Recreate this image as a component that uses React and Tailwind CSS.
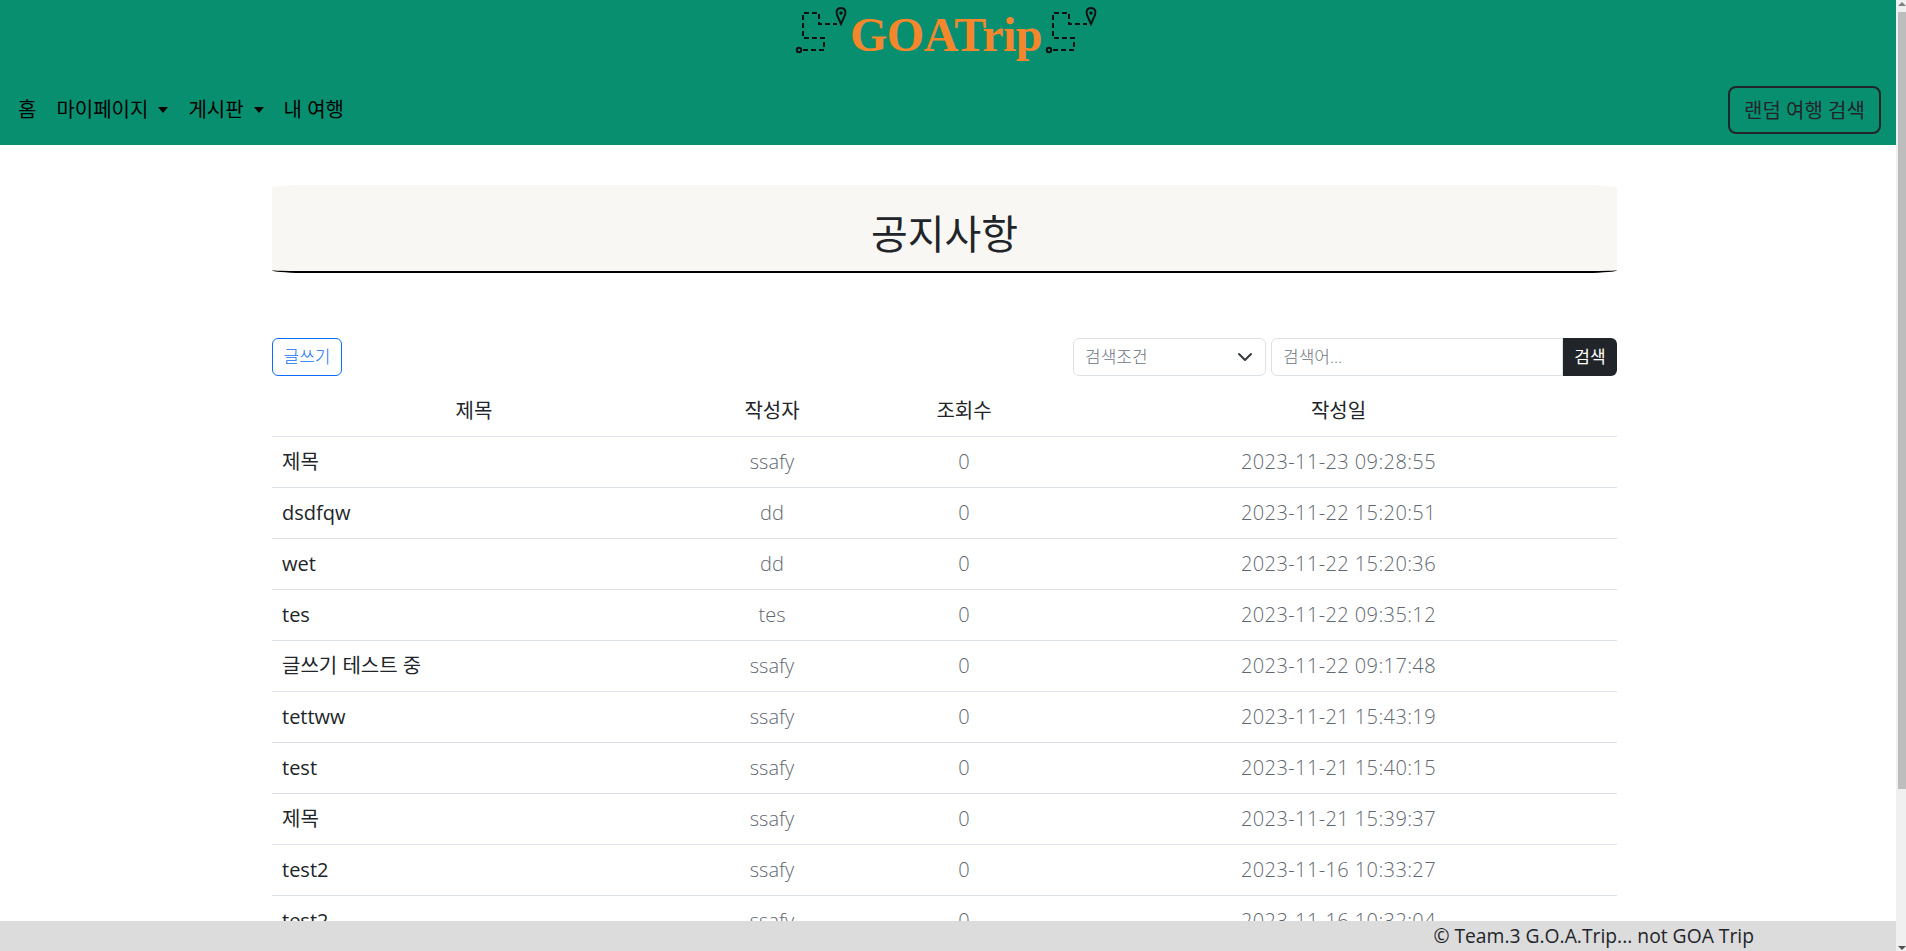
const rows = [
  ["제목", "ssafy", "0", "2023-11-23 09:28:55"],
  ["dsdfqw", "dd", "0", "2023-11-22 15:20:51"],
  ["wet", "dd", "0", "2023-11-22 15:20:36"],
  ["tes", "tes", "0", "2023-11-22 09:35:12"],
  ["글쓰기 테스트 중", "ssafy", "0", "2023-11-22 09:17:48"],
  ["tettww", "ssafy", "0", "2023-11-21 15:43:19"],
  ["test", "ssafy", "0", "2023-11-21 15:40:15"],
  ["제목", "ssafy", "0", "2023-11-21 15:39:37"],
  ["test2", "ssafy", "0", "2023-11-16 10:33:27"],
  ["test2", "ssafy", "0", "2023-11-16 10:32:04"],
];

function RouteIcon() {
  return (
    <svg width="52" height="50" viewBox="0 0 52 50" fill="none" stroke="#111" strokeWidth="2" className="shrink-0">
      <path d="M8 45 H29 V33 H8 V8 H24 V19 H42" strokeDasharray="5 3" />
      <circle cx="4" cy="45" r="2.2" />
      <path d="M46 3 C41.5 3 41 7 42 10 L46 19 L50 10 C51 7 50.5 3 46 3 Z" />
      <circle cx="46" cy="8" r="0.8" fill="#111" />
    </svg>
  );
}

function Caret() {
  return <span className="ml-[10px] inline-block h-0 w-0 -translate-y-[2px] border-x-[5px] border-t-[6px] border-x-transparent border-t-black align-middle" />;
}

export default function App() {
  return (
    <div className="relative flex h-[951px] overflow-hidden bg-white font-['Open_Sans','Noto_Sans_CJK_KR',sans-serif] text-[20px] text-[#212529]">
      <div className="min-w-0 flex-1">
        <header className="h-[145px] bg-[#088f70]">
          <div className="flex h-[73px] items-start justify-center pr-[4px] pt-[5px]">
            <RouteIcon />
            <span className="mx-[3px] mt-[5px] font-['Liberation_Serif',serif] text-[48px] leading-[50px] font-bold tracking-[-0.5px] text-[#f4872b]">GOATrip</span>
            <RouteIcon />
          </div>
          <nav className="flex h-[72px] items-center justify-between pl-[18px] pr-[15px] text-black">
            <div className="flex items-center gap-[20px] pt-[2px]">
              <span>홈</span>
              <span>마이페이지<Caret /></span>
              <span>게시판<Caret /></span>
              <span>내 여행</span>
            </div>
            <button type="button" className="mt-[1px] h-[48px] w-[153px] rounded-[8px] border-2 border-[#212529] pt-[2px] text-[#212529]">랜덤 여행 검색</button>
          </nav>
        </header>

        <main className="ml-[272px] mt-[40px] w-[1345px]">
          <div className="flex h-[88px] items-center justify-center rounded-[30px/3px] border-b-2 border-black bg-[#f8f7f3] pt-[12px] text-[40px] text-[#212529]">공지사항</div>

          <div className="mt-[65px] flex items-start justify-between">
            <button type="button" className="h-[38px] w-[70px] rounded-[6px] border border-[#0d6efd] text-[17px] font-light text-[#0d6efd]">글쓰기</button>
            <div className="flex gap-[5px]">
              <div className="flex h-[38px] w-[193px] items-center justify-between rounded-[6px] border border-[#dee2e6] pl-[11px] pr-[12px] text-[17px] font-light text-[#6c757d]">
                <span>검색조건</span>
                <svg width="16" height="16" viewBox="0 0 16 16" fill="none" stroke="#343a40" strokeWidth="2" strokeLinecap="round" strokeLinejoin="round"><path d="M2 5l6 6 6-6" /></svg>
              </div>
              <div className="flex h-[38px]">
                <div className="flex w-[292px] items-center rounded-l-[6px] border border-[#dee2e6] pl-[11px] text-[17px] font-light text-[#6c757d]">검색어...</div>
                <button type="button" className="w-[54px] rounded-r-[6px] bg-[#212529] text-[17px] text-white">검색</button>
              </div>
            </div>
          </div>

          <table className="mt-[9px] w-full table-fixed border-collapse">
            <colgroup>
              <col className="w-[404px]" />
              <col className="w-[192px]" />
              <col className="w-[192px]" />
              <col />
            </colgroup>
            <thead>
              <tr className="h-[51px] border-b border-[#dee2e6] text-center">
                <th className="pt-[2px] font-normal">제목</th>
                <th className="pt-[2px] font-normal">작성자</th>
                <th className="pt-[2px] font-normal">조회수</th>
                <th className="pt-[2px] font-normal">작성일</th>
              </tr>
            </thead>
            <tbody>
              {rows.map((row, i) => (
                <tr key={i} className="h-[51px] border-b border-[#dee2e6]">
                  <td className="pl-[10px]">{row[0]}</td>
                  <td className="text-center font-light text-[#5f676f]">{row[1]}</td>
                  <td className="text-center font-light text-[#5f676f]">{row[2]}</td>
                  <td className="text-center font-light tracking-[0.4px] text-[#5f676f]">{row[3]}</td>
                </tr>
              ))}
            </tbody>
          </table>
        </main>
      </div>

      <div className="relative w-[10px] shrink-0 bg-[#f0f0f0] pl-[2px] pt-[12px]">
        <div className="h-[777px] bg-[#bdbdbd]" />
        <span className="absolute right-0 top-[2px] h-0 w-0 border-x-[4px] border-b-[4px] border-x-transparent border-b-[#808080]" />
        <span className="absolute bottom-[1px] right-0 h-0 w-0 border-x-[4px] border-t-[4px] border-x-transparent border-t-[#505050]" />
      </div>

      <footer className="absolute bottom-0 left-0 right-[10px] flex h-[30px] items-center justify-end bg-[#dcdcdc] pr-[142px] text-[19.3px] text-[#212529]">
        © Team.3 G.O.A.Trip... not GOA Trip
      </footer>
    </div>
  );
}
